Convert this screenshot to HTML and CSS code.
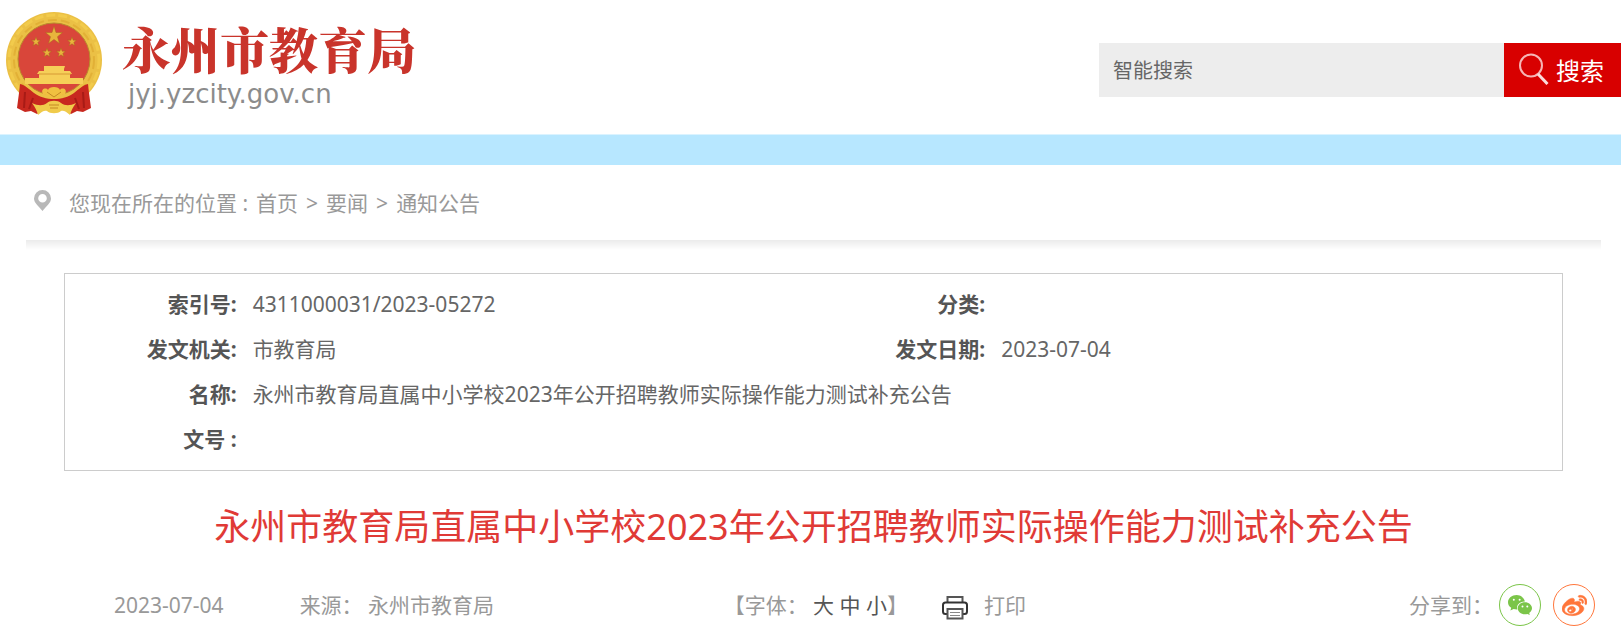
FILE: index.html
```
<!DOCTYPE html>
<html lang="zh-CN">
<head>
    <meta charset="UTF-8">
    <meta name="viewport" content="width=device-width, initial-scale=1.0">
    <title>永州市教育局</title>
    <link rel="stylesheet" href="styles.css">
</head>
<body>
    <header class="header">
        <a class="logo" href="/">
            <svg class="emblem" viewBox="0 0 98 104" aria-hidden="true">
                <circle cx="48" cy="48" r="48" fill="#ebc045"/>
                <circle cx="48" cy="48" r="45" fill="none" stroke="#f2cb4c" stroke-width="3" stroke-dasharray="9 3"/>
                <circle cx="48" cy="48" r="40" fill="none" stroke="#e2b036" stroke-width="2" stroke-dasharray="9 4"/>
                <circle cx="48" cy="47" r="36" fill="#d9463a" stroke="#b98a2c" stroke-width="1"/>
                <g fill="#e8b43c" stroke="#a8651f" stroke-width="0.5">
                    <path d="M48 14l2 6.500h6.500l-5 4.200 2 6.800-5.500-4-5.500 4 2-6.800-5-4.200h6.500z"/>
                    <path d="M30 25l1.200 3.200h3.200l-2.600 2.200 1.100 3.400-2.900-2-2.900 2 1.100-3.400-2.600-2.200h3.200z"/>
                    <path d="M66 25l1.200 3.200h3.200l-2.600 2.200 1.100 3.400-2.900-2-2.900 2 1.100-3.400-2.600-2.200h3.200z"/>
                    <path d="M41 36l1.200 3.200h3.200l-2.600 2.200 1.100 3.400-2.900-2-2.900 2 1.100-3.400-2.600-2.200h3.200z"/>
                    <path d="M55 36l1.200 3.200h3.200l-2.600 2.200 1.100 3.400-2.900-2-2.900 2 1.100-3.400-2.600-2.200h3.200z"/>
                </g>
                <!-- gate -->
                <path d="M38 54h21l-1 3v2h6l2 3h-2v4h13v6H19v-6h14v-4h-2l2-3h5v-2z" fill="#f6cf58"/>
                <path d="M33 62h32" stroke="#d79a35" stroke-width="1"/>
                <!-- ribbons -->
                <path d="M14 72c5 1 9 5 14 9 6 4 12 6 20 6s14-2 20-6c5-4 9-8 14-9l1 9 2 15-8 4-6-1-6 3-8-5h-18l-8 5-6-3-6 1-8-4 2-15z" fill="#c8281f"/>
                <path d="M19 80l-1 16M27 86l-4 11M77 80l1 16M69 86l4 11" stroke="#a81b16" stroke-width="2"/>
                <path d="M37 82c-3-5 3-7 5-4 1-4 11-4 12 0 2-3 8-1 5 4l-6 2-5 3-5-3z" fill="#f0c040"/>
                <path d="M26 91c6 3 11 3 15 0 3-3 11-3 14 0 4 3 9 3 15 0-3 4-5 8-6 12-4-4-7-5-9-4-3 3-11 3-14 0-2-1-5 0-9 4-1-4-3-8-6-12z" fill="#f0cb4b"/>
                <path d="M43 93h10M44 96h8M41 80l7 5 7-5" fill="none" stroke="#c48a24" stroke-width="1"/>
            </svg>
            <span class="logo-text">
                <strong class="logo-name">永州市教育局</strong>
                <span class="logo-url">jyj.yzcity.gov.cn</span>
            </span>
        </a>
        <form class="search" action="/search">
            <input class="search-input" type="text" name="q" placeholder="智能搜索" aria-label="智能搜索">
            <button class="search-btn" type="submit">
                <svg class="search-icon" viewBox="0 0 30 32" aria-hidden="true">
                    <circle cx="12" cy="12.500" r="11" fill="none" stroke="#f6b5b5" stroke-width="2"/>
                    <path d="M19 21l9.500 10" stroke="#fbdcdc" stroke-width="3"/>
                </svg>
                搜索
            </button>
        </form>
    </header>
    <div class="band"></div>

    <main class="main">
        <nav class="location">
            <svg class="pin" viewBox="0 0 17 21" aria-hidden="true">
                <path d="M8.500 0a8.500 8.500 0 0 0-8.500 8.500C0 13 4.500 16 8.500 21 12.500 16 17 13 17 8.500A8.500 8.500 0 0 0 8.500 0zm0 4a4.300 4.300 0 1 1 0 8.600 4.300 4.300 0 0 1 0-8.600z" fill="#b8b8b8" fill-rule="evenodd"/>
            </svg>
            <div class="crumbs">
                <span class="crumbs-label">您现在所在的位置 :</span>
                <a href="#">首页</a>
                <span>&gt;</span>
                <a href="#">要闻</a>
                <span>&gt;</span>
                <a href="#">通知公告</a>
            </div>
        </nav>

        <article class="article">
            <div class="info">
                <table class="info-table">
                    <tr>
                        <th>索引号:</th>
                        <td>4311000031/2023-05272</td>
                        <th>分类:</th>
                        <td></td>
                    </tr>
                    <tr>
                        <th>发文机关:</th>
                        <td>市教育局</td>
                        <th>发文日期:</th>
                        <td>2023-07-04</td>
                    </tr>
                    <tr>
                        <th>名称:</th>
                        <td colspan="3">永州市教育局直属中小学校2023年公开招聘教师实际操作能力测试补充公告</td>
                    </tr>
                    <tr>
                        <th>文号 :</th>
                        <td colspan="3"></td>
                    </tr>
                </table>
            </div>
            <h1 class="title">永州市教育局直属中小学校2023年公开招聘教师实际操作能力测试补充公告</h1>
        </article>

        <div class="meta">
            <div class="meta-source">
                <span>2023-07-04</span>
                <span>来源： 永州市教育局</span>
            </div>
            <div class="meta-tools">
                <span>【字体： <a class="size" href="#">大</a> <a class="size" href="#">中</a> <a class="size" href="#">小</a>】</span>
                <a class="print" href="#">
                    <svg class="print-icon" viewBox="0 0 26 24" fill="none" stroke="#333" stroke-width="2" aria-hidden="true">
                        <path d="M5.500 6V1h15v5" stroke="#555"/>
                        <path d="M5 18H3.500Q1 18 1 15.500V9Q1 6.500 3.500 6.500h19Q25 6.500 25 9v6.500Q25 18 22.500 18H21"/>
                        <path d="M5.500 13h15v9.500h-15z" stroke="#555"/>
                        <path d="M8 16.500h10M8 19.500h10" stroke="#888" stroke-width="1"/>
                    </svg>
                    打印
                </a>
            </div>
            <div class="share">
                <span>分享到：</span>
                <div class="share-list">
                    <a class="share-btn wechat" href="#" aria-label="微信">
                        <svg viewBox="0 0 24 20" width="24" height="20" fill="currentColor" aria-hidden="true">
                            <path d="M8.700 0C3.900 0 0 3.200 0 7.200c0 2.300 1.200 4.200 3.200 5.600L2.400 15.500l3.200-1.600c1 .3 2 .5 3.100.5h.6c-1.300-4 2.300-8 7.600-7.800C16.200 2.900 12.800 0 8.700 0z"/>
                            <path d="M24 13.300c0-3.300-3.300-6-7.100-6-4.100 0-7.200 2.700-7.200 6s3.100 6 7.200 6c.8 0 1.700-.2 2.500-.4l2.400 1.100-.6-2C22.900 16.800 24 15.200 24 13.300z"/>
                            <g fill="#fff">
                                <circle cx="5.800" cy="4.800" r="1"/>
                                <circle cx="11.600" cy="4.800" r="1"/>
                                <circle cx="14.500" cy="11.500" r="1"/>
                                <circle cx="19.300" cy="11.500" r="1"/>
                            </g>
                        </svg>
                    </a>
                    <a class="share-btn weibo" href="#" aria-label="微博">
                        <svg viewBox="0 0 24 24" width="25" height="25" fill="currentColor" stroke="currentColor" stroke-width="0.5" aria-hidden="true">
                            <path d="M10.098 20.323c-3.977.391-7.414-1.406-7.672-4.020-.259-2.609 2.759-5.047 6.740-5.441 3.979-.394 7.413 1.404 7.671 4.018.259 2.600-2.759 5.049-6.737 5.439l-.002.004zM9.050 17.219c-.384.616-1.208.884-1.829.602-.612-.279-.793-.991-.406-1.593.379-.595 1.176-.861 1.793-.601.622.263.82.972.442 1.592zm1.270-1.627c-.141.237-.449.353-.689.253-.236-.09-.313-.361-.177-.586.138-.227.436-.346.672-.24.239.09.315.36.18.601l.014-.028zm.176-2.719c-1.893-.493-4.033.45-4.857 2.118-.836 1.704-.026 3.591 1.886 4.210 1.983.64 4.318-.341 5.132-2.179.8-1.793-.201-3.642-2.161-4.149zm7.563-1.224c-.346-.105-.57-.18-.405-.615.375-.977.42-1.804 0-2.404-.781-1.112-2.915-1.053-5.364-.03 0 0-.766.331-.571-.271.376-1.217.315-2.224-.27-2.809-1.338-1.337-4.869.045-7.888 3.080C1.309 10.870 0 13.273 0 15.348c0 3.981 5.099 6.395 10.086 6.395 6.536 0 10.888-3.801 10.888-6.820 0-1.822-1.547-2.854-2.915-3.284v.01zm1.908-5.092c-.766-.856-1.908-1.187-2.960-.962-.436.09-.706.511-.616.932.09.42.511.691.932.602.511-.105 1.067.044 1.442.465.376.421.466.977.316 1.473-.136.406.089.856.51.992.405.119.857-.105.992-.512.33-1.021.12-2.178-.646-3.035l.03.045zm2.418-2.195c-1.576-1.757-3.905-2.419-6.054-1.968-.496.104-.812.587-.706 1.081.104.496.586.813 1.082.707 1.532-.331 3.185.15 4.296 1.383 1.112 1.246 1.429 2.943.947 4.416-.165.48.106 1.007.586 1.157.479.165.991-.104 1.157-.586.675-2.088.241-4.478-1.338-6.235l.03.045z"/>
                        </svg>
                    </a>
                </div>
            </div>
        </div>
    </main>
</body>
</html>
```
FILE: styles.css
```
* {
    box-sizing: border-box;
}
body {
    margin: 0;
    background-color: #fff;
    color: #666;
    font-family: "Noto Sans", "Noto Sans CJK SC", sans-serif;
    font-size: 21px;
    line-height: 30px;
}
a {
    color: inherit;
    text-decoration: none;
}

/* Header */
.header {
    display: flex;
    align-items: flex-start;
    justify-content: space-between;
    height: 134px;
    padding: 12px 0 0 6px;
}
.logo {
    display: flex;
    gap: 18px;
}
.emblem {
    width: 98px;
    height: 104px;
}
.logo-text {
    display: flex;
    flex-direction: column;
    padding-top: 6px;
}
.logo-name {
    font-family: "Noto Serif CJK SC", "Noto Sans CJK SC", serif;
    font-weight: 900;
    font-size: 49px;
    line-height: 60px;
    color: #c9342b;
}
.logo-url {
    padding-left: 6px;
    font-family: "DejaVu Sans", sans-serif;
    font-size: 26px;
    line-height: 32px;
    color: #8c8c8c;
}
.search {
    display: flex;
    width: 522px;
    height: 54px;
    margin-top: 31px;
}
.search-input {
    flex: 1;
    min-width: 0;
    padding: 0 14px;
    border: none;
    background-color: #ededed;
    color: #666;
    font-family: inherit;
    font-size: 20px;
}
.search-input::placeholder {
    color: #666;
}
.search-btn {
    display: flex;
    align-items: center;
    gap: 7px;
    padding: 0 17px 2px 15px;
    border: none;
    background-color: #d80000;
    color: #fff;
    font-family: inherit;
    font-size: 24px;
    cursor: pointer;
}
.search-icon {
    width: 30px;
    height: 32px;
}
.band {
    height: 31px;
    background-color: #b7e7ff;
    border-top: 1px solid #dbf3ff;
}

/* Breadcrumb */
.main {
    margin: 0 20px 0 26px;
}
.location {
    display: flex;
    align-items: center;
    gap: 18px;
    height: 75px;
    padding-left: 8px;
    color: #999;
}
.pin {
    width: 17px;
    height: 21px;
    margin-bottom: 4px;
}
.crumbs {
    display: flex;
    gap: 8px;
}

/* Article */
.article {
    padding: 33px 38px 0;
    background: linear-gradient(#ebebeb, #fff) no-repeat;
    background-size: 100% 10px;
}
.info {
    padding: 7px 0 9px;
    border: 1px solid #ccc;
}
.info-table {
    width: 100%;
    table-layout: fixed;
    border-collapse: collapse;
}
.info-table th,
.info-table td {
    height: 45px;
    padding: 0 8px;
}
.info-table th {
    width: 12%;
    text-align: right;
    color: #555;
}
.title {
    margin: 31px 0 0;
    text-align: center;
    font-size: 36px;
    font-weight: normal;
    line-height: 50px;
    color: #e03a36;
}

/* Date, font size, print and share */
.meta {
    display: flex;
    align-items: center;
    margin-top: 32px;
    padding: 0 6px 0 88px;
    color: #999;
}
.meta-source {
    display: flex;
    gap: 76px;
}
.meta-tools {
    display: flex;
    gap: 34px;
    margin-left: 15.5%;
}
.size {
    color: #555;
}
.print {
    display: flex;
    align-items: center;
    gap: 16px;
}
.print-icon {
    width: 26px;
    height: 24px;
    margin-top: 5px;
}
.share {
    display: flex;
    align-items: center;
    gap: 6px;
    margin-left: auto;
}
.share-list {
    display: flex;
    gap: 12px;
}
.share-btn {
    display: flex;
    align-items: center;
    justify-content: center;
    width: 42px;
    height: 42px;
    border: 1px solid;
    border-radius: 50%;
}
.wechat {
    color: #7bc549;
}
.weibo {
    color: #ff763b;
}
```
